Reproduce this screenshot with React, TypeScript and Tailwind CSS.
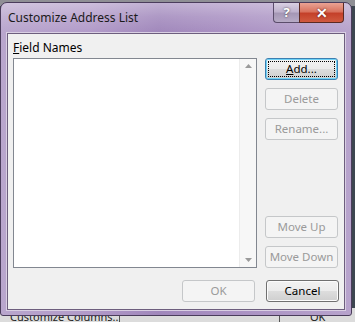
import React from "react";

const font = { fontFamily: '"Noto Sans", "Open Sans", sans-serif' };

function Btn({
  children,
  disabled,
  focused,
}: {
  children: React.ReactNode;
  disabled?: boolean;
  focused?: boolean;
}) {
  if (disabled) {
    return (
      <div className="w-[73px] h-[22px] rounded-[3px] border border-[#c5c7c9] bg-[#f4f4f4] flex items-center justify-center text-[11.5px] text-[#9a9a9a]">
        {children}
      </div>
    );
  }
  if (focused) {
    return (
      <div className="w-[73px] h-[22px] rounded-[3px] border border-[#3c7fb1] shadow-[inset_0_0_0_1px_#6fd3f7] bg-[linear-gradient(to_bottom,#f2f2f2_0%,#ebebeb_50%,#dddddd_51%,#cfcfcf_100%)] flex items-center justify-center p-[2px]">
        <div className="w-full h-full border border-dotted border-black flex items-center justify-center text-[11.5px] text-black">
          {children}
        </div>
      </div>
    );
  }
  return (
    <div className="w-[73px] h-[22px] rounded-[3px] border border-[#707070] shadow-[inset_0_0_0_1px_#fcfcfc] bg-[linear-gradient(to_bottom,#f2f2f2_0%,#ebebeb_50%,#dddddd_51%,#cfcfcf_100%)] flex items-center justify-center text-[11.5px] text-black">
      {children}
    </div>
  );
}

export default function App() {
  return (
    <div
      className="relative w-[355px] h-[322px] overflow-hidden bg-[#3d4650]"
      style={font}
    >
      {/* desktop strip behind, bottom */}
      <div className="absolute left-0 right-0 bottom-0 h-[14px] bg-[#dcdcdc] flex text-[11px] text-[#222] leading-none whitespace-nowrap">
        <div className="w-[120px] h-full border-r border-[#555] pl-[10px] pt-[3px] overflow-hidden">Customize Columns...</div>
        <div className="w-[160px] h-full border-r border-[#555]" />
        <div className="flex-1 h-full pl-[30px] pt-[3px]">OK</div>
      </div>
      {/* top background */}
      <div className="absolute left-0 top-0 right-0 h-[6px] bg-[#8f8f95]" />

      {/* window */}
      <div className="absolute left-0 top-[2px] w-[352px] h-[314px] rounded-t-[7px] rounded-b-[3px] border border-[#4b3d5c] bg-[linear-gradient(to_right,#b9a6cd_0%,#b29bc9_25%,#a087bb_45%,#a990c2_65%,#b7a3cc_100%)] flex flex-col overflow-hidden">
        {/* title bar */}
        <div className="relative h-[30px] shrink-0 flex items-start">
          <div className="absolute inset-0 bg-[linear-gradient(to_bottom,rgba(255,255,255,0.35)_0%,rgba(255,255,255,0.15)_45%,rgba(255,255,255,0)_100%)]" />
          <div className="relative pl-[7px] pt-[9px] text-[12px] text-[#1a1a1a] leading-none">
            Customize Address List
          </div>
          <div className="relative ml-auto mr-[7px] flex h-[20px]">
            <div className="w-[26px] h-[20px] rounded-bl-[4px] border border-[#5b4d6b] border-t-0 border-r-0 bg-[linear-gradient(to_bottom,#d9d0e2_0%,#bfb2cd_45%,#a597b5_55%,#b7abc6_100%)] flex items-center justify-center text-[13px] font-bold text-white [text-shadow:0_0_2px_#333]">
              ?
            </div>
            <div className="w-[45px] h-[20px] rounded-br-[4px] border border-[#5b2a22] border-t-0 bg-[linear-gradient(to_bottom,#eaa394_0%,#d9735f_45%,#c4402a_55%,#d05a3f_100%)] flex items-center justify-center text-[14px] font-bold text-white [text-shadow:0_0_2px_#400]">
              ✕
            </div>
          </div>
        </div>
        {/* client */}
        <div className="mx-[6px] mb-[5px] flex-1 border border-[#6d5e7e] bg-[#f0f0f0] flex flex-col px-[5px] pt-[5px] shadow-[0_0_0_1px_#d9cfe3]">
          <div className="flex flex-1">
            <div className="flex flex-col w-[244px]">
              <div className="text-[12px] leading-[16px] text-black h-[19px] pt-[1px]">
                <span className="underline">F</span>ield Names
              </div>
              <div className="h-[210px] border border-[#828790] bg-white flex justify-end">
                <div className="w-[17px] h-full bg-[#f7f7f7] border-l border-[#ececec] flex flex-col items-center justify-between py-[5px]">
                  <svg width="7" height="4" viewBox="0 0 7 4">
                    <path d="M0 4 L3.5 0 L7 4 Z" fill="#9a9a9a" />
                  </svg>
                  <svg width="7" height="4" viewBox="0 0 7 4">
                    <path d="M0 0 L3.5 4 L7 0 Z" fill="#9a9a9a" />
                  </svg>
                </div>
              </div>
            </div>
            <div className="ml-[8px] flex flex-col pt-[19px] h-[229px]">
              <Btn focused>
                <span>
                  <span className="underline">A</span>dd...
                </span>
              </Btn>
              <div className="mt-[8px]">
                <Btn disabled>Delete</Btn>
              </div>
              <div className="mt-[8px]">
                <Btn disabled>Rename...</Btn>
              </div>
              <div className="mt-auto">
                <Btn disabled>Move Up</Btn>
              </div>
              <div className="mt-[8px]">
                <Btn disabled>Move Down</Btn>
              </div>
            </div>
          </div>
          <div className="flex justify-end gap-[11px] pb-[7px]">
            <Btn disabled>OK</Btn>
            <Btn>Cancel</Btn>
          </div>
        </div>
      </div>
    </div>
  );
}
